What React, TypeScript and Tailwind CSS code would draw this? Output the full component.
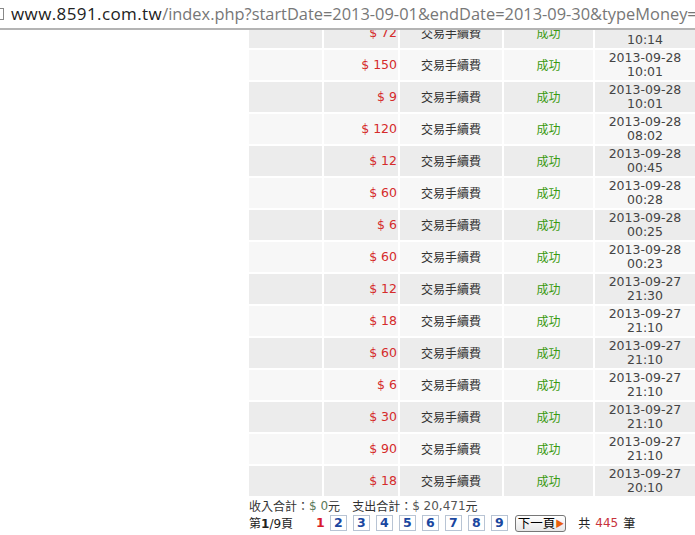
import React from "react";

type Row = { amt: number; date: string; time: string };

const rows: Row[] = [
  { amt: 72, date: "2013-09-28", time: "10:14" },
  { amt: 150, date: "2013-09-28", time: "10:01" },
  { amt: 9, date: "2013-09-28", time: "10:01" },
  { amt: 120, date: "2013-09-28", time: "08:02" },
  { amt: 12, date: "2013-09-28", time: "00:45" },
  { amt: 60, date: "2013-09-28", time: "00:28" },
  { amt: 6, date: "2013-09-28", time: "00:25" },
  { amt: 60, date: "2013-09-28", time: "00:23" },
  { amt: 12, date: "2013-09-27", time: "21:30" },
  { amt: 18, date: "2013-09-27", time: "21:10" },
  { amt: 60, date: "2013-09-27", time: "21:10" },
  { amt: 6, date: "2013-09-27", time: "21:10" },
  { amt: 30, date: "2013-09-27", time: "21:10" },
  { amt: 90, date: "2013-09-27", time: "21:10" },
  { amt: 18, date: "2013-09-27", time: "20:10" },
];

const FONT = { fontFamily: '"DejaVu Sans", "Noto Sans CJK TC", sans-serif' };
const CJK = { fontFamily: '"Noto Sans CJK TC", "DejaVu Sans", sans-serif' };

export default function App() {
  return (
    <div className="w-[695px] h-[535px] bg-white overflow-hidden flex flex-col" style={FONT}>
      {/* URL bar */}
      <div className="h-[30px] shrink-0 flex items-center bg-white border-b-2 border-[#b4b4b4] relative z-10 overflow-hidden whitespace-nowrap">
        <div className="w-[4px] h-[12px] border border-l-0 border-[#888] mr-[7px] shrink-0" />
        <span
          className="text-[16.4px] leading-none text-[#777]"
          style={{ fontFamily: '"Open Sans", "Liberation Sans", sans-serif' }}
        >
          <span className="text-[#222] text-[17px] tracking-[0.4px]">www.8591.com.tw</span>
          /index.php?startDate=2013-09-01&amp;endDate=2013-09-30&amp;typeMoney=3
        </span>
      </div>

      {/* content */}
      <div className="flex-1 overflow-hidden">
        <div className="ml-[249px] mt-[-12px] flex flex-col">
          <div className="flex flex-col gap-[2px]">
            {rows.map((r, i) => {
              const bg = i % 2 === 0 ? "bg-[#ececec]" : "bg-[#f7f7f7]";
              return (
                <div
                  key={i}
                  className="grid grid-cols-[73px_74px_102px_89px_100px] gap-x-[2px] h-[30px] text-[12.5px]"
                >
                  <div className={bg} />
                  <div className={`${bg} flex items-center justify-end pr-px text-[#d52b2b]`}>
                    $ {r.amt}
                  </div>
                  <div className={`${bg} flex items-center justify-center text-[12px] text-[#333]`} style={CJK}>
                    交易手續費
                  </div>
                  <div className={`${bg} flex items-center justify-center text-[12px] text-[#3a9a10]`} style={CJK}>
                    成功
                  </div>
                  <div className={`${bg} flex flex-col items-center justify-center leading-[14px] text-[#444]`}>
                    <span>{r.date}</span>
                    <span>{r.time}</span>
                  </div>
                </div>
              );
            })}
          </div>

          {/* summary */}
          <div className="mt-[2px] h-[15px] flex items-center text-[12px] text-[#333] leading-none" style={CJK}>
            <span>收入合計：</span>
            <span className="text-[#5a7a5a]" style={FONT}>$ 0</span>
            <span>元</span>
            <span className="ml-[12px]">支出合計：</span>
            <span className="text-[#555]" style={FONT}>$ 20,471</span>
            <span>元</span>
          </div>

          {/* pagination */}
          <div className="mt-[1px] h-[18px] flex items-center text-[12px] text-[#222] leading-none" style={CJK}>
            <span>
              第<b style={FONT}>1</b>
              <span style={FONT}>/9</span>頁
            </span>
            <b className="ml-[23px] text-[#d81b2b] text-[12.5px]" style={FONT}>1</b>
            <div className="ml-[5px] flex gap-[6px]">
              {[2, 3, 4, 5, 6, 7, 8, 9].map((n) => (
                <span
                  key={n}
                  className="w-[17px] h-[16px] border border-[#b8c4d4] bg-white flex items-center justify-center font-bold text-[12.5px] text-[#1a47a0]"
                  style={FONT}
                >
                  {n}
                </span>
              ))}
            </div>
            <span className="ml-[7px] h-[17px] pl-[2px] pr-[1px] border border-[#777] rounded-[3px] bg-gradient-to-b from-white to-[#e8e8e8] flex items-center text-[12.5px] text-black">
              下一頁<span className="text-[#e8600c] text-[9px]">▶</span>
            </span>
            <span className="ml-[12px]">共</span>
            <span className="ml-[5px] text-[#c8323c]" style={FONT}>445</span>
            <span className="ml-[5px]">筆</span>
          </div>
        </div>
      </div>
    </div>
  );
}
